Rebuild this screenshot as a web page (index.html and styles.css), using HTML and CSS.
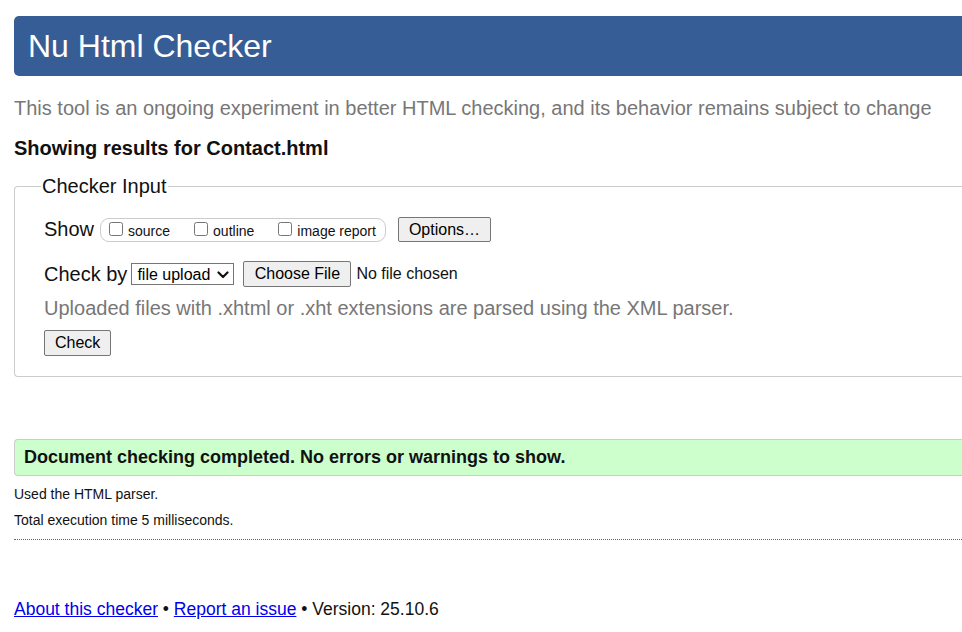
FILE: index.html
```html
<!DOCTYPE html>
<html lang="en">
<head>
<meta charset="utf-8">
<title>Nu Html Checker</title>
<link rel="stylesheet" href="styles.css">
</head>
<body>
<div class="page">
  <h1 class="banner">Nu Html Checker</h1>
  <p class="tagline">This tool is an ongoing experiment in better HTML checking, and its behavior remains subject to change</p>
  <p class="results-for">Showing results for Contact.html</p>
  <form class="checker">
    <fieldset class="input-box">
      <legend class="input-legend">Checker Input</legend>
      <div class="row show-row">
        <span class="row-label show-label">Show</span>
        <fieldset class="show-group">
          <label class="opt"><input type="checkbox" class="cb"><span>source</span></label>
          <label class="opt"><input type="checkbox" class="cb"><span>outline</span></label>
          <label class="opt"><input type="checkbox" class="cb"><span>image report</span></label>
        </fieldset>
        <button type="button" class="btn opt-btn">Options…</button>
      </div>
      <div class="row checkby-row">
        <span class="row-label">Check by</span>
        <span class="sel-wrap">
          <select class="sel"><option>file upload</option></select>
          <svg class="chev" width="12" height="8" viewBox="0 0 12 8" aria-hidden="true"><path d="M1.5 1.5 L6 6 L10.5 1.5" fill="none" stroke="#111" stroke-width="2.2" stroke-linecap="round" stroke-linejoin="round"/></svg>
        </span>
        <button type="button" class="btn file-btn">Choose File</button>
        <span class="no-file">No file chosen</span>
      </div>
      <p class="hint">Uploaded files with .xhtml or .xht extensions are parsed using the XML parser.</p>
      <div class="row submit-row">
        <button type="button" class="btn check-btn">Check</button>
      </div>
    </fieldset>
  </form>
  <p class="success">Document checking completed. No errors or warnings to show.</p>
  <p class="meta meta-first">Used the HTML parser.</p>
  <p class="meta">Total execution time 5 milliseconds.</p>
  <hr class="sep">
  <p class="footer"><a href="#">About this checker</a> • <a href="#">Report an issue</a> • Version: 25.10.6</p>
</div>
</body>
</html>
```
FILE: styles.css
```css
html, body {
  margin: 0;
  padding: 0;
  overflow: hidden;
  background: #fff;
}
body {
  font-family: "Liberation Sans", Arial, sans-serif;
  color: #111;
}
.page {
  width: 1000px;
  padding: 16px 0 0 14px;
}
.banner {
  margin: 0;
  height: 60px;
  box-sizing: border-box;
  padding: 12px 0 0 14px;
  background: #365d95;
  color: #fff;
  font-weight: normal;
  font-size: 32px;
  line-height: 36px;
  border-radius: 5px 0 0 5px;
}
.tagline {
  margin: 20px 0 0 0;
  font-size: 20px;
  line-height: 24px;
  color: #777;
}
.results-for {
  margin: 16px 0 0 0;
  font-size: 20px;
  line-height: 24px;
  font-weight: bold;
}
.checker {
  margin: 14px 0 0 0;
}
.input-box {
  margin: 0;
  border: 1px solid #ccc;
  border-right: none;
  border-radius: 4px 0 0 4px;
  padding: 8px 0 20px 29px;
}
.input-legend {
  font-size: 20px;
  padding: 0 1px;
  margin-left: -3px;
  line-height: 24px;
}
.row {
  display: flex;
  align-items: center;
}
.show-row {
  margin-top: 11px;
}
.row-label {
  font-size: 20px;
  margin-right: 4px;
}
.show-label {
  margin-right: 6px;
}
.show-group {
  display: flex;
  align-items: center;
  margin: 0;
  padding: 0 9px 0 8px;
  height: 22px;
  border: 1px solid #ccc;
  border-radius: 9px;
  gap: 24px;
}
.opt {
  display: flex;
  align-items: center;
  font-size: 14px;
  margin-top: 2px;
}
.cb {
  width: 14px;
  height: 14px;
  margin: 0 5px 4px 0;
}
.btn {
  font-family: "Liberation Sans", Arial, sans-serif;
  font-size: 16px;
  padding: 2px 10px;
  height: 25px;
  background: #efefef;
  border: 1px solid #767676;
  border-radius: 2px;
  color: #000;
}
.opt-btn {
  margin-left: 12px;
}
.checkby-row {
  margin-top: 19px;
}
.sel-wrap {
  position: relative;
  display: inline-flex;
}
.sel {
  appearance: none;
  -webkit-appearance: none;
  font-family: "Liberation Sans", Arial, sans-serif;
  font-size: 16px;
  height: 22px;
  width: 103px;
  padding: 0 0 0 5px;
  border: 1px solid #767676;
  border-radius: 0;
  background: #fff;
  color: #000;
}
.chev {
  position: absolute;
  right: 5px;
  top: 8px;
  pointer-events: none;
}
.file-btn {
  margin-left: 9px;
  height: 26px;
  width: 108px;
  padding: 2px 0;
}
.no-file {
  margin-left: 5px;
  font-size: 16px;
}
.hint {
  margin: 9px 0 0 0;
  font-size: 20px;
  line-height: 24px;
  color: #777;
}
.submit-row {
  margin-top: 10px;
}
.check-btn {
  height: 26px;
}
.success {
  margin: 62px 0 0 0;
  height: 37px;
  box-sizing: border-box;
  background: #ccffcc;
  border: 1px solid #ccc;
  border-right: none;
  border-radius: 4px 0 0 4px;
  padding: 7px 0 0 9px;
  font-size: 18px;
  line-height: 20px;
  font-weight: bold;
}
.meta {
  margin: 9px 0 0 0;
  font-size: 14px;
  line-height: 17px;
}
.meta-first {
  margin-top: 10px;
}
.sep {
  margin: 10px 0 0 0;
  border: none;
  border-top: 1px dotted #666;
  height: 0;
}
.footer {
  margin: 58px 0 0 0;
  font-size: 17.5px;
  line-height: 22px;
}
.footer a {
  color: #00e;
}
```
